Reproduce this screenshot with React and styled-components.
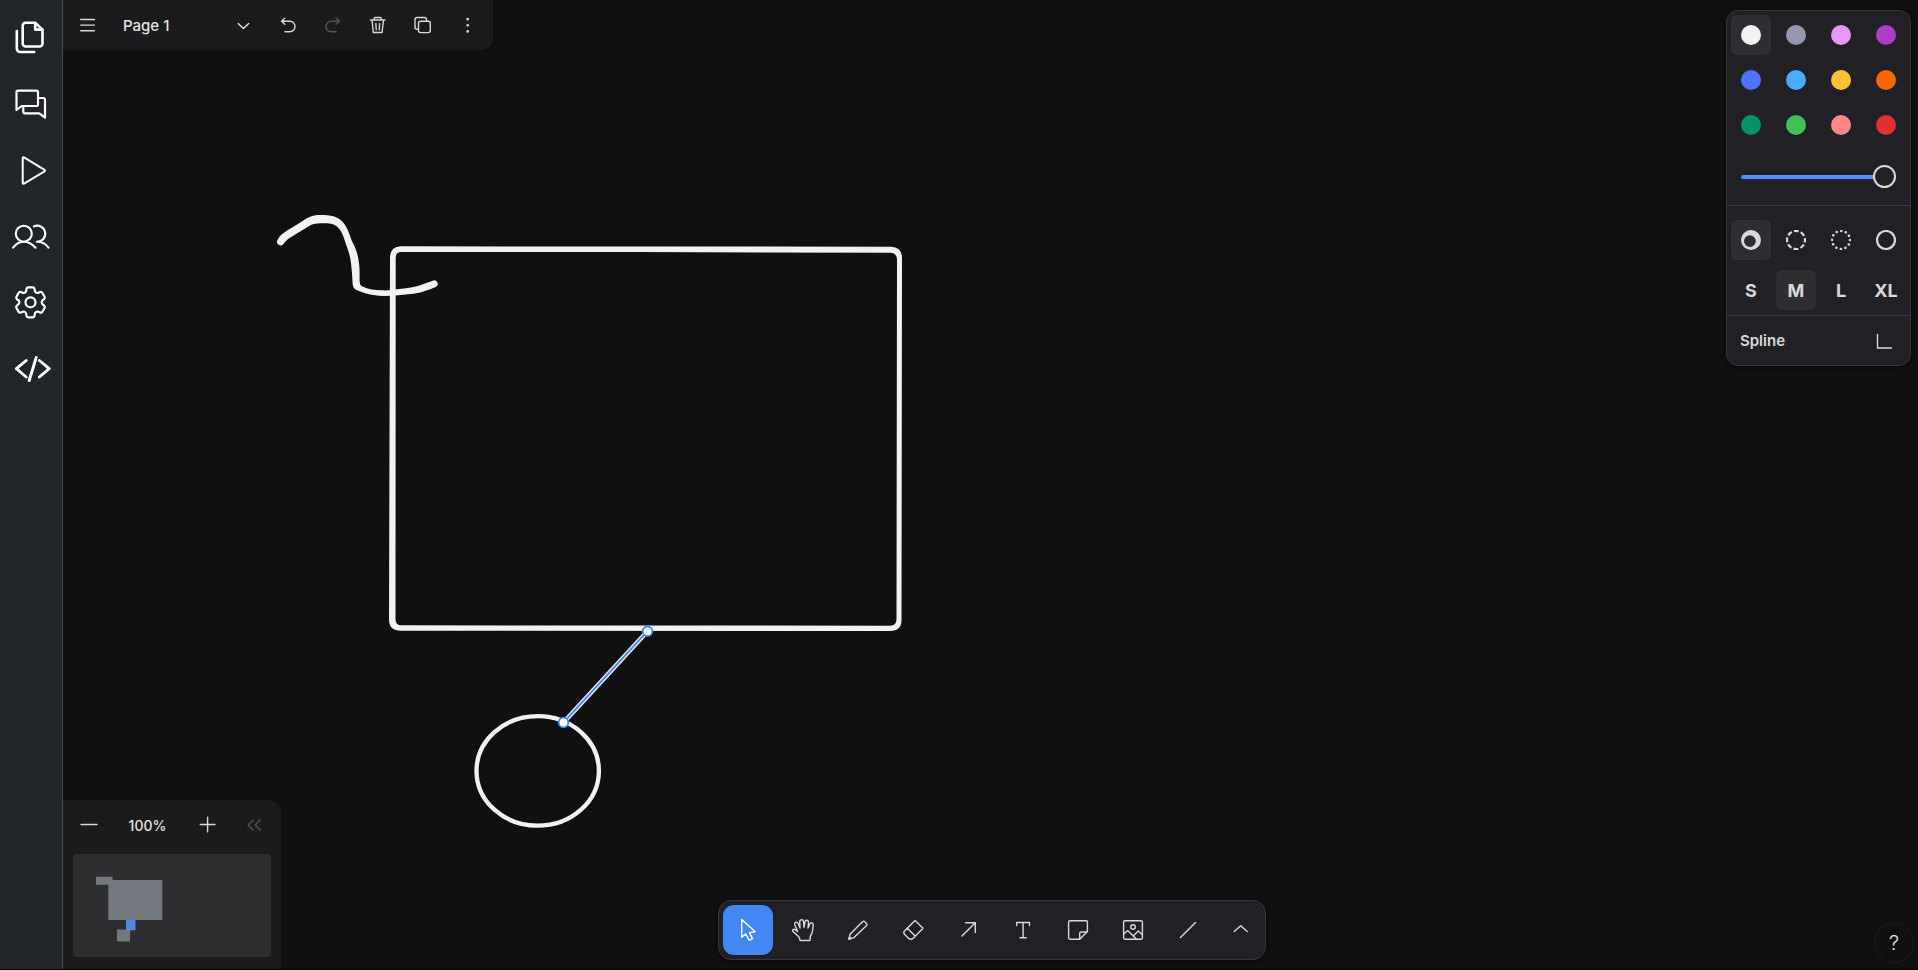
import React, { useState } from "react";
import styled, { createGlobalStyle } from "styled-components";
import { HiOutlineCog6Tooth } from "react-icons/hi2";

const GlobalStyle = createGlobalStyle`
  * { box-sizing: border-box; }
  html, body { margin: 0; background: #000; }
  body { font-family: Inter, "Liberation Sans", sans-serif; font-size: 14px; color: #e4e4e4; }
  button { font: inherit; color: inherit; background: none; border: 0; padding: 0; margin: 0; }
`;

const Shell = styled.div`
  display: flex;
  height: 100vh;
  border-bottom: 1px solid #000;
`;

const Sidebar = styled.nav`
  display: flex;
  flex-direction: column;
  flex: none;
  width: 63px;
  padding-top: 4px;
  background: #212529;
  border-right: 1px solid #444a50;
`;

const SideButton = styled.button`
  display: grid;
  place-items: center;
  height: 66px;
  color: #fff;
`;

const Stage = styled.main`
  position: relative;
  flex: 1;
  min-width: 0;
  overflow: hidden;
  background: #101011;
`;

const Drawing = styled.svg`
  position: absolute;
  inset: 0;
  width: 100%;
  height: 100%;
`;

const Overlay = styled.div`
  position: absolute;
  inset: 0;
  display: flex;
  flex-direction: column;
  justify-content: space-between;
`;

const TopRow = styled.div`
  display: flex;
  justify-content: space-between;
  align-items: flex-start;
`;

const BottomRow = styled.div`
  display: grid;
  grid-template-columns: 1fr auto 1fr;
  align-items: end;
`;

const MenuBar = styled.header`
  display: flex;
  height: 50px;
  padding: 0 3px 0 2px;
  background: #1b1b1d;
  border-bottom-right-radius: 12px;
`;

const IconButton = styled.button`
  display: grid;
  place-items: center;
  width: 45px;
  height: 50px;
  color: ${(p) => (p.$dim ? "#505458" : "#d9d9d9")};
`;

const PageButton = styled.button`
  display: flex;
  align-items: center;
  justify-content: space-between;
  width: 155px;
  padding: 0 10px 0 13px;
  font-size: 15px;
  font-weight: 500;
`;

const StylePanel = styled.aside`
  width: 185px;
  margin: 10px 7px 0 0;
  background: #212125;
  border: 1px solid #38353f;
  border-radius: 12px;
  box-shadow: 0 1px 4px #000000a0;
`;

const PanelSection = styled.section`
  padding: ${(p) => p.$pad};
  border-bottom: 1px solid #38353f;
`;

const OptionGrid = styled.div`
  display: grid;
  grid-template-columns: repeat(4, 40px);
  gap: ${(p) => p.$rowGap} 5px;
`;

const Option = styled.button`
  display: grid;
  place-items: center;
  height: 40px;
  border-radius: 6px;
  font-size: 18px;
  font-weight: 700;
  color: #d9d9d9;
  background: ${(p) => (p.$active ? "#2e2e32" : "transparent")};
`;

const Swatch = styled.span`
  width: 20px;
  height: 20px;
  border-radius: 50%;
  background: ${(p) => p.$color};
`;

const Opacity = styled.input`
  display: block;
  appearance: none;
  width: 155px;
  height: 45px;
  margin: 9px 10px 0;
  background: transparent;
  &::-webkit-slider-runnable-track {
    height: 4px;
    border-radius: 2px;
    background: #4f8ff7;
  }
  &::-webkit-slider-thumb {
    appearance: none;
    width: 23px;
    height: 23px;
    margin-top: -10px;
    border: 2px solid #d9d9d9;
    border-radius: 50%;
    background: #212125;
  }
`;

const SplineButton = styled.button`
  display: flex;
  align-items: center;
  justify-content: space-between;
  width: 100%;
  height: 49px;
  padding: 0 14px 0 13px;
  font-size: 15px;
  font-weight: 600;
  color: #d9d9d9;
`;

const Navigator = styled.section`
  width: 218px;
  background: #1b1b1d;
  border-top-right-radius: 12px;
`;

const ZoomRow = styled.div`
  display: flex;
  padding-left: 2px;
`;

const ZoomLevel = styled.button`
  width: 75px;
  font-weight: 500;
`;

const CollapseButton = styled(IconButton)`
  margin-left: 1px;
`;

const MiniMap = styled.svg`
  display: block;
  width: 198px;
  height: 103px;
  margin: 4px 10px 12px;
  border-radius: 4px;
  background: #2e2e30;
`;

const ToolBar = styled.div`
  display: flex;
  gap: 5px;
  height: 60px;
  margin: 0 0 9px 3px;
  padding: 4px;
  background: #212125;
  border: 1px solid #38353f;
  border-radius: 13px;
  box-shadow: 0 1px 4px #000000a0;
`;

const Tool = styled.button`
  display: grid;
  place-items: center;
  width: ${(p) => (p.$narrow ? "43px" : "50px")};
  height: 50px;
  border-radius: 11px;
  color: ${(p) => (p.$active ? "#fff" : "#d9d9d9")};
  background: ${(p) => (p.$active ? "#4387f4" : "transparent")};
`;

const HelpButton = styled.button`
  justify-self: end;
  width: 40px;
  height: 40px;
  margin: 0 4px 6px 0;
  border: 1px solid #1c1c1e;
  border-radius: 50%;
  font-size: 20px;
  font-weight: 300;
`;

function Icon({ size = 24, width = 1.4, children }) {
  return (
    <svg
      width={size}
      height={size}
      viewBox={`0 0 ${size} ${size}`}
      fill="none"
      stroke="currentColor"
      strokeWidth={width}
      strokeLinecap="round"
      strokeLinejoin="round"
      aria-hidden="true"
    >
      {children}
    </svg>
  );
}

const sideItems = [
  {
    name: "Files",
    icon: (
      <Icon size={40} width={2.6}>
        <path d="M14.500 5.700H24.200L31.500 12.600V26.500a3 3 0 0 1-3 3H14.700a3 3 0 0 1-3-3V8.700a3 3 0 0 1 2.800-3z" />
        <path d="M24.200 6.200V12.600H31.200M5.800 14V31.500a3.500 3.500 0 0 0 3.500 3.500H23.200" />
      </Icon>
    ),
  },
  {
    name: "Chat",
    icon: (
      <Icon size={40} width={2.2}>
        <path d="M5.500 27V9.200a1.500 1.500 0 0 1 1.500-1.500H25.500a1.500 1.500 0 0 1 1.500 1.500V21.500a1.500 1.500 0 0 1-1.500 1.500H10.700z" />
        <path d="M27.300 15H32.500a1.500 1.500 0 0 1 1.500 1.500V34.700L28.300 30.300H13.800a1.500 1.500 0 0 1-1.500-1.500V23.200" />
      </Icon>
    ),
  },
  {
    name: "Play",
    icon: (
      <Icon size={40} width={2}>
        <path d="M11.700 9.200v24.600q0 1.400 1.300.8L33.600 22.300q.9-.7 0-1.500L13 8.400q-1.300-.6-1.300.8z" />
      </Icon>
    ),
  },
  {
    name: "People",
    icon: (
      <Icon size={40} width={2.1}>
        <circle cx="12.800" cy="18.700" r="8" />
        <path d="M2 32.700Q6.500 26.700 12.800 26.700T24.500 32.700M22.800 11.500a8 8 0 1 1 3 15.200Q33.500 26.700 37.500 32.700" />
      </Icon>
    ),
  },
  {
    name: "Settings",
    icon: (
      <Icon size={40}>
        <HiOutlineCog6Tooth size={40} x={-0.5} y={1.3} strokeWidth={1.3} />
      </Icon>
    ),
  },
  {
    name: "Code",
    icon: (
      <Icon size={40} width={2.900}>
        <path d="M15.200 13.500L5.400 21.700L15.200 30M25.200 10.500L18.200 33.500M28.400 13.500L38.200 21.700L28.400 30" />
      </Icon>
    ),
  },
];

const menuActions = [
  { name: "Undo", d: "M8.800 5.300L5.500 8.300L8.800 11.300M5.500 8.300H13.800a5.200 5.200 0 0 1 0 10.400H9" },
  { name: "Redo", dim: true, d: "M15.200 5.300L18.500 8.300L15.200 11.300M18.500 8.300H10.200a5.200 5.200 0 0 0 0 10.400H15" },
  { name: "Delete", d: "M4.500 7H19M8.200 7V5.500a1 1 0 0 1 1-1H14.200a1 1 0 0 1 1 1V7M6 7L7.300 19.500H16L17.500 7M9.900 10.500L10.200 16.800M13.600 10.500L13.300 16.800" },
  { name: "Duplicate", d: "M7.500 16.300H6a2 2 0 0 1-2-2V6.500a2 2 0 0 1 2-2H13.500a2 2 0 0 1 2 2V8M9.500 8.200H17.300a2 2 0 0 1 2 2V17.600a2 2 0 0 1-2 2H9.500a2 2 0 0 1-2-2V10.200a2 2 0 0 1 2-2z" },
];

const colors = [
  ["White", "#f2f2f2"], ["Grey", "#9398b0"], ["Light violet", "#e599f7"], ["Violet", "#ae3ec9"],
  ["Blue", "#4f72fc"], ["Light blue", "#4dabf7"], ["Yellow", "#ffc034"], ["Orange", "#f76707"],
  ["Green", "#099268"], ["Light green", "#40c057"], ["Light red", "#ff8787"], ["Red", "#e03131"],
];

const dashes = [
  { name: "Draw", icon: <path fill="currentColor" stroke="none" fillRule="evenodd" d="M10 0a10 10 0 1 1 0 20a10 10 0 1 1 0-20zM8.900 5.200a5.900 5.900 0 1 0 0 11.800a5.900 5.900 0 1 0 0-11.800z" /> },
  { name: "Dashed", icon: <circle cx="10" cy="10" r="9" strokeLinecap="butt" strokeDasharray="4.900 2.170" strokeDashoffset="2.450" /> },
  { name: "Dotted", icon: <circle cx="10" cy="10" r="9" strokeWidth="2.700" strokeDasharray="0 4.712" /> },
  { name: "Solid", icon: <circle cx="10" cy="10" r="9" /> },
];

const tools = [
  { name: "Select", icon: <path d="M5.700 1.500V19.300L9.700 15.900L13.200 22.200L16.500 20.600L13.500 14.600L19.200 13.700z" /> },
  { name: "Hand", icon: <path d="M9 22.500Q9 20 7.300 18.300L2 13.500C.8 12 2.800 10.700 4.200 11.700L6.600 13.500L3.700 6.500C3.200 4.200 6 3.200 7 5.300L9 10L8.700 3.500C8.700 1.300 12 1 12.500 3.300L13 9.500L14 3.700C14.500 1.500 17.500 2 17.500 4.200L17 10L18.800 6C19.600 4 22.500 4.700 22.200 7L21.500 13Q21.200 15.500 19.500 18Q19 19.500 19 22.500z" /> },
  { name: "Draw", icon: <><path d="M2.900 21.100L4.300 16L16.700 3.600Q17.600 2.700 18.500 3.500L20.700 5.700Q21.500 6.500 20.600 7.400L8 19.600z" /><path fill="currentColor" d="M2.900 21.100L3.500 19L5 20.500z" /></> },
  { name: "Eraser", icon: <path d="M14 2.500L22 10.300L12 20.400Q9.800 22.200 7.700 20.400L3.500 16.300Q2 14.500 3.500 13zM6.300 10.300L14.200 18" /> },
  { name: "Arrow", icon: <path d="M6 18L19.300 4.700M9.500 4.700H19.300V14.500" /> },
  { name: "Text", icon: <path d="M5.700 7.500V4.500H18.500V7.500M12.100 4.500V19.700M9 19.700H15.200" /> },
  { name: "Note", icon: <path d="M4 2.700H20a1.400 1.400 0 0 1 1.400 1.400V13.500L13.700 21.200H4a1.400 1.400 0 0 1-1.400-1.400V4.100a1.400 1.400 0 0 1 1.400-1.400zM13.700 21V15.400a1.400 1.400 0 0 1 1.400-1.400H21.200" /> },
  { name: "Image", icon: <><path d="M4 2.700H20a1.400 1.400 0 0 1 1.400 1.400V19.800a1.400 1.400 0 0 1-1.400 1.400H4a1.400 1.400 0 0 1-1.400-1.400V4.100a1.400 1.400 0 0 1 1.400-1.400z" /><circle cx="12" cy="9" r="2.300" /><path d="M2.700 16L6.700 12.500L15 20.800M12.700 17.500L17.300 13L21.300 16.700" /></> },
  { name: "Line", icon: <path d="M4.500 19.500L19.500 4.500" /> },
];

function CanvasDrawing() {
  return (
    <Drawing aria-label="Canvas" role="img">
      <g transform="translate(-63 0)" fill="none" stroke="#f2f2f2">
        <path
          transform="translate(260 200) scale(.33333)"
          fill="#f2f2f2"
          stroke="none"
          d="M53 119C61 103 76 95 94 84C112 73 128 62 142 54C156 46 168 45 184 45C208 45 226 47 242 60C258 73 266 94 276 124C290 150 294 166 297 190C300 212 298 230 299 246Q300 256 306 259C325 268 344 271 365 271C385 272 395 270 410 268C440 265 468 261 493 251L518 242A10.500 10.500 0 0 1 527 261C505 270 485 278 460 281C430 284 400 288 370 288C335 287 312 280 291 271Q279 266 278 253C277 235 276 215 273 190C270 165 264 150 257 130C250 108 244 90 230 79C216 69 202 70 183 70C166 70 156 73 144 80C126 91 108 102 90 113C82 118 76 123 71 131A10.500 10.500 0 0 1 53 119z"
        />
        <path
          fill="#f2f2f2"
          stroke="none"
          fillRule="evenodd"
          d="M401 246.200L560 246.500L891 246.700Q902 247 902 258L901.500 620Q901.500 631 890 631L401 630.800Q389 630.800 389 619.500L390 258Q390 246.500 401 246.200zM401 252L640 252L890 252.800Q897 253 897 260L896.500 619Q896.500 625.700 890 625.700L401 625.300Q395.500 625.300 395.500 619L395.700 258Q395.700 252 401 252z"
        />
        <ellipse cx="537.700" cy="770.900" rx="61.200" ry="54.800" strokeWidth="4.300" />
        <path d="M563.500 722.500L647.500 631.200" strokeWidth="4.600" />
        <path d="M563.500 722.500L647.500 631.200" stroke="#4387f4" strokeWidth="1.900" />
        <g fill="#fff" stroke="#3d86f5" strokeWidth="1.800">
          <circle cx="563.500" cy="722.500" r="4.800" />
          <circle cx="647.500" cy="631.300" r="4.800" />
        </g>
      </g>
    </Drawing>
  );
}

export default function App() {
  const [tool, setTool] = useState("Select");
  const [color, setColor] = useState("White");
  const [dash, setDash] = useState("Draw");
  const [size, setSize] = useState("M");

  return (
    <>
      <GlobalStyle />
      <Shell>
        <Sidebar>
          {sideItems.map((item) => (
            <SideButton key={item.name} aria-label={item.name}>{item.icon}</SideButton>
          ))}
        </Sidebar>
        <Stage>
          <CanvasDrawing />
          <Overlay>
            <TopRow>
              <MenuBar>
                <IconButton aria-label="Menu">
                  <Icon><path d="M4.700 6.500H18.500M4.700 12.100H18.500M4.700 17.700H18.500" /></Icon>
                </IconButton>
                <PageButton>
                  Page 1
                  <Icon><path d="M7.200 10.500L12.400 15.500L17.700 10.500" /></Icon>
                </PageButton>
                {menuActions.map((a) => (
                  <IconButton key={a.name} aria-label={a.name} $dim={a.dim}>
                    <Icon><path d={a.d} /></Icon>
                  </IconButton>
                ))}
                <IconButton aria-label="More">
                  <Icon width={2.700}><path d="M11.700 6.200V6.210M11.700 12.300V12.310M11.700 18.400V18.410" /></Icon>
                </IconButton>
              </MenuBar>
              <StylePanel>
                <PanelSection $pad="4px 4px 6px">
                  <OptionGrid $rowGap="5px">
                    {colors.map(([name, value]) => (
                      <Option key={name} aria-label={name} $active={name === color} onClick={() => setColor(name)}>
                        <Swatch $color={value} />
                      </Option>
                    ))}
                  </OptionGrid>
                  <Opacity type="range" aria-label="Opacity" min="0" max="100" defaultValue="100" />
                </PanelSection>
                <PanelSection $pad="14px 4px 5px">
                  <OptionGrid $rowGap="10px">
                    {dashes.map((d) => (
                      <Option key={d.name} aria-label={d.name} $active={d.name === dash} onClick={() => setDash(d.name)}>
                        <Icon size={20} width={2.2}>{d.icon}</Icon>
                      </Option>
                    ))}
                    {["S", "M", "L", "XL"].map((s) => (
                      <Option key={s} $active={s === size} onClick={() => setSize(s)}>{s}</Option>
                    ))}
                  </OptionGrid>
                </PanelSection>
                <SplineButton>
                  Spline
                  <Icon><path d="M5.500 5.500V19H19.500" /></Icon>
                </SplineButton>
              </StylePanel>
            </TopRow>
            <BottomRow>
              <Navigator>
                <ZoomRow>
                  <IconButton aria-label="Zoom out"><Icon><path d="M5 11.500H21" /></Icon></IconButton>
                  <ZoomLevel>100%</ZoomLevel>
                  <IconButton aria-label="Zoom in"><Icon><path d="M4.200 11.500H19M11.600 4.100V18.900" /></Icon></IconButton>
                  <CollapseButton aria-label="Collapse" $dim>
                    <Icon><path d="M11.200 7L6.200 12L11.200 17M18.200 7L13.200 12L18.200 17" /></Icon>
                  </CollapseButton>
                </ZoomRow>
                <MiniMap viewBox="0 1 198 103" role="img" aria-label="Minimap">
                  <g fill="#74797f">
                    <path d="M23 23.700H39.500V27H89.300V67H35.300V31.700H23z" />
                    <rect x="44" y="76.500" width="13" height="12" />
                  </g>
                  <rect x="53" y="67" width="9.500" height="10.300" fill="#5089e0" />
                </MiniMap>
              </Navigator>
              <ToolBar role="toolbar" aria-label="Tools">
                {tools.map((t) => (
                  <Tool key={t.name} aria-label={t.name} $active={t.name === tool} onClick={() => setTool(t.name)}>
                    <Icon>{t.icon}</Icon>
                  </Tool>
                ))}
                <Tool aria-label="More tools" $narrow>
                  <Icon width={1.500}><path d="M6.200 13.500L12.700 7.700L19.200 13.500" /></Icon>
                </Tool>
              </ToolBar>
              <HelpButton aria-label="Help">?</HelpButton>
            </BottomRow>
          </Overlay>
        </Stage>
      </Shell>
    </>
  );
}
